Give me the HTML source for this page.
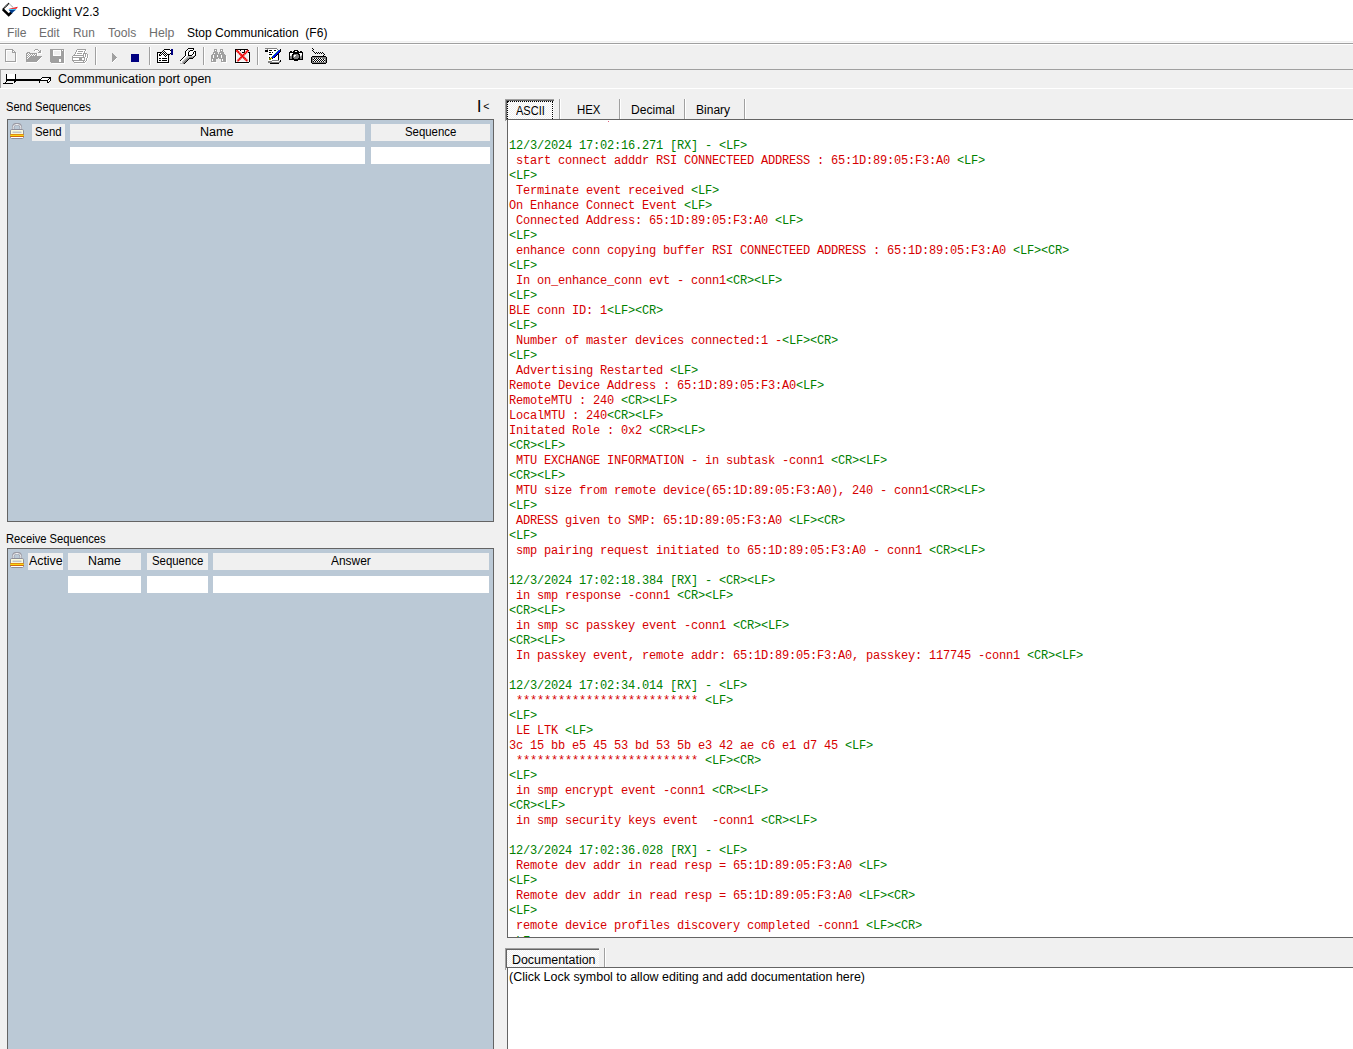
<!DOCTYPE html>
<html lang="en">
<head>
<meta charset="utf-8">
<title>Docklight V2.3</title>
<style>
*{box-sizing:border-box;margin:0;padding:0}
html,body{width:1353px;height:1049px;overflow:hidden;background:#f0f0f0}
body{position:relative;font-family:"Liberation Sans",sans-serif;font-size:12px;color:#000}
.a{position:absolute}
.t{position:absolute;white-space:pre;line-height:16px;height:16px;font-size:12px;transform-origin:0 0}
#topwhite{left:0;top:0;width:1353px;height:41px;background:#fff}
.hl{left:0;width:1353px;height:1px}
.panel{background:#bbc9d6;border:1px solid #646464}
.cell{background:#f0f0f0}
.wcell{background:#fff}
.vsep{width:2px;border-left:1px solid #a0a0a0;border-right:1px solid #fff}
#log{left:507px;top:119px;width:860px;height:819px;background:#fff;border:1px solid #646464;overflow:hidden}
#logtext{position:absolute;left:1px;top:19px;font-family:"Liberation Mono",monospace;font-size:12px;letter-spacing:-0.2012px;line-height:15px;color:#d60000}
#logtext div{height:15px;white-space:pre}
.g{color:#008000}
#doc{left:507px;top:967px;width:860px;height:100px;background:#fff;border:1px solid #646464}
.dith{background-color:#f0f0f0;background-image:
 linear-gradient(45deg,#fff 25%,transparent 25%,transparent 75%,#fff 75%),
 linear-gradient(45deg,#fff 25%,transparent 25%,transparent 75%,#fff 75%);
 background-size:2px 2px;background-position:0 0,1px 1px}
</style>
</head>
<body>
<div class="a" id="topwhite"></div>
<div class="a hl" style="top:42px;background:#f8f8f8"></div>
<div class="a hl" style="top:43px;background:#a0a0a0"></div>
<div class="a hl" style="top:44px;background:#fff"></div>
<div class="a hl" style="top:69px;background:#a0a0a0"></div>
<div class="a" style="left:0;top:69px;width:1px;height:19px;background:#a0a0a0"></div>
<div class="a hl" style="top:88px;background:#fff"></div>

<!-- toolbar separators -->
<div class="a vsep" style="left:95px;top:47px;height:18px"></div>
<div class="a vsep" style="left:149px;top:47px;height:18px"></div>
<div class="a vsep" style="left:203px;top:47px;height:18px"></div>
<div class="a vsep" style="left:257px;top:47px;height:18px"></div>

<!-- left panels -->
<div class="a panel" style="left:7px;top:119px;width:487px;height:403px"></div>
<div class="a cell" style="left:32px;top:124px;width:33px;height:17px"></div>
<div class="a cell" style="left:70px;top:124px;width:295px;height:17px"></div>
<div class="a cell" style="left:371px;top:124px;width:119px;height:17px"></div>
<div class="a wcell" style="left:70px;top:147px;width:295px;height:17px"></div>
<div class="a wcell" style="left:371px;top:147px;width:119px;height:17px"></div>

<div class="a panel" style="left:7px;top:548px;width:487px;height:520px"></div>
<div class="a cell" style="left:28px;top:553px;width:35px;height:17px"></div>
<div class="a cell" style="left:68px;top:553px;width:73px;height:17px"></div>
<div class="a cell" style="left:147px;top:553px;width:61px;height:17px"></div>
<div class="a cell" style="left:213px;top:553px;width:276px;height:17px"></div>
<div class="a wcell" style="left:68px;top:576px;width:73px;height:17px"></div>
<div class="a wcell" style="left:147px;top:576px;width:61px;height:17px"></div>
<div class="a wcell" style="left:213px;top:576px;width:276px;height:17px"></div>

<!-- tabs -->
<div class="a dith" style="left:507px;top:101px;width:47px;height:18px"></div>
<div class="a" style="left:505px;top:99px;width:49px;height:1px;background:#a0a0a0"></div>
<div class="a" style="left:506px;top:100px;width:48px;height:1px;background:#646464"></div>
<div class="a" style="left:505px;top:99px;width:1px;height:22px;background:#a0a0a0"></div>
<div class="a" style="left:506px;top:100px;width:1px;height:20px;background:#646464"></div>
<div class="a" style="left:507px;top:101px;width:46px;height:18px;border:1px dotted #000;border-bottom:none"></div>
<div class="a vsep" style="left:559px;top:99px;height:20px"></div>
<div class="a vsep" style="left:619px;top:99px;height:20px"></div>
<div class="a vsep" style="left:684px;top:99px;height:20px"></div>
<div class="a vsep" style="left:744px;top:99px;height:20px"></div>

<div class="a" id="log">
<div class="a" style="left:100px;top:1px;width:1px;height:1px;background:#e06080"></div>
<div id="logtext">
<div class="g">12/3/2024 17:02:16.271 [RX] - &lt;LF&gt;</div>
<div> start connect adddr RSI CONNECTEED ADDRESS : 65:1D:89:05:F3:A0 <span class="g">&lt;LF&gt;</span></div>
<div><span class="g">&lt;LF&gt;</span></div>
<div> Terminate event received <span class="g">&lt;LF&gt;</span></div>
<div>On Enhance Connect Event <span class="g">&lt;LF&gt;</span></div>
<div> Connected Address: 65:1D:89:05:F3:A0 <span class="g">&lt;LF&gt;</span></div>
<div><span class="g">&lt;LF&gt;</span></div>
<div> enhance conn copying buffer RSI CONNECTEED ADDRESS : 65:1D:89:05:F3:A0 <span class="g">&lt;LF&gt;&lt;CR&gt;</span></div>
<div><span class="g">&lt;LF&gt;</span></div>
<div> In on_enhance_conn evt - conn1<span class="g">&lt;CR&gt;&lt;LF&gt;</span></div>
<div><span class="g">&lt;LF&gt;</span></div>
<div>BLE conn ID: 1<span class="g">&lt;LF&gt;&lt;CR&gt;</span></div>
<div><span class="g">&lt;LF&gt;</span></div>
<div> Number of master devices connected:1 -<span class="g">&lt;LF&gt;&lt;CR&gt;</span></div>
<div><span class="g">&lt;LF&gt;</span></div>
<div> Advertising Restarted <span class="g">&lt;LF&gt;</span></div>
<div>Remote Device Address : 65:1D:89:05:F3:A0<span class="g">&lt;LF&gt;</span></div>
<div>RemoteMTU : 240 <span class="g">&lt;CR&gt;&lt;LF&gt;</span></div>
<div>LocalMTU : 240<span class="g">&lt;CR&gt;&lt;LF&gt;</span></div>
<div>Initated Role : 0x2 <span class="g">&lt;CR&gt;&lt;LF&gt;</span></div>
<div><span class="g">&lt;CR&gt;&lt;LF&gt;</span></div>
<div> MTU EXCHANGE INFORMATION - in subtask -conn1 <span class="g">&lt;CR&gt;&lt;LF&gt;</span></div>
<div><span class="g">&lt;CR&gt;&lt;LF&gt;</span></div>
<div> MTU size from remote device(65:1D:89:05:F3:A0), 240 - conn1<span class="g">&lt;CR&gt;&lt;LF&gt;</span></div>
<div><span class="g">&lt;LF&gt;</span></div>
<div> ADRESS given to SMP: 65:1D:89:05:F3:A0 <span class="g">&lt;LF&gt;&lt;CR&gt;</span></div>
<div><span class="g">&lt;LF&gt;</span></div>
<div> smp pairing request initiated to 65:1D:89:05:F3:A0 - conn1 <span class="g">&lt;CR&gt;&lt;LF&gt;</span></div>
<div>&nbsp;</div>
<div class="g">12/3/2024 17:02:18.384 [RX] - &lt;CR&gt;&lt;LF&gt;</div>
<div> in smp response -conn1 <span class="g">&lt;CR&gt;&lt;LF&gt;</span></div>
<div><span class="g">&lt;CR&gt;&lt;LF&gt;</span></div>
<div> in smp sc passkey event -conn1 <span class="g">&lt;CR&gt;&lt;LF&gt;</span></div>
<div><span class="g">&lt;CR&gt;&lt;LF&gt;</span></div>
<div> In passkey event, remote addr: 65:1D:89:05:F3:A0, passkey: 117745 -conn1 <span class="g">&lt;CR&gt;&lt;LF&gt;</span></div>
<div>&nbsp;</div>
<div class="g">12/3/2024 17:02:34.014 [RX] - &lt;LF&gt;</div>
<div> ************************** <span class="g">&lt;LF&gt;</span></div>
<div><span class="g">&lt;LF&gt;</span></div>
<div> LE LTK <span class="g">&lt;LF&gt;</span></div>
<div>3c 15 bb e5 45 53 bd 53 5b e3 42 ae c6 e1 d7 45 <span class="g">&lt;LF&gt;</span></div>
<div> ************************** <span class="g">&lt;LF&gt;&lt;CR&gt;</span></div>
<div><span class="g">&lt;LF&gt;</span></div>
<div> in smp encrypt event -conn1 <span class="g">&lt;CR&gt;&lt;LF&gt;</span></div>
<div><span class="g">&lt;CR&gt;&lt;LF&gt;</span></div>
<div> in smp security keys event  -conn1 <span class="g">&lt;CR&gt;&lt;LF&gt;</span></div>
<div>&nbsp;</div>
<div class="g">12/3/2024 17:02:36.028 [RX] - &lt;LF&gt;</div>
<div> Remote dev addr in read resp = 65:1D:89:05:F3:A0 <span class="g">&lt;LF&gt;</span></div>
<div><span class="g">&lt;LF&gt;</span></div>
<div> Remote dev addr in read resp = 65:1D:89:05:F3:A0 <span class="g">&lt;LF&gt;&lt;CR&gt;</span></div>
<div><span class="g">&lt;LF&gt;</span></div>
<div> remote device profiles discovery completed -conn1 <span class="g">&lt;LF&gt;&lt;CR&gt;</span></div>
<div style="position:relative;top:1px"><span class="g">&lt;LF&gt;</span></div>
</div>
</div>

<!-- documentation tab -->
<div class="a dith" style="left:507px;top:950px;width:92px;height:17px"></div>
<div class="a" style="left:505px;top:948px;width:94px;height:1px;background:#a0a0a0"></div>
<div class="a" style="left:506px;top:949px;width:93px;height:1px;background:#646464"></div>
<div class="a" style="left:505px;top:948px;width:1px;height:22px;background:#a0a0a0"></div>
<div class="a" style="left:506px;top:949px;width:1px;height:19px;background:#646464"></div>
<div class="a vsep" style="left:604px;top:948px;height:19px"></div>
<div class="a" id="doc"></div>

<svg class="a" style="left:0;top:44px" width="340" height="45" viewBox="0 44 340 45" shape-rendering="crispEdges">
<path fill="#a0a0a0" d="M5 49h8v1h-8zM5 50h1v1h-1zM12 50h2v1h-2zM5 51h1v1h-1zM12 51h1v1h-1zM14 51h1v1h-1zM5 52h1v1h-1zM12 52h4v1h-4zM5 53h1v1h-1zM15 53h1v1h-1zM5 54h1v1h-1zM15 54h1v1h-1zM5 55h1v1h-1zM15 55h1v1h-1zM5 56h1v1h-1zM15 56h1v1h-1zM5 57h1v1h-1zM15 57h1v1h-1zM5 58h1v1h-1zM15 58h1v1h-1zM5 59h1v1h-1zM15 59h1v1h-1zM5 60h1v1h-1zM15 60h1v1h-1zM5 61h11v1h-11zM35 49h3v1h-3zM34 50h1v1h-1zM38 50h1v1h-1zM40 50h1v1h-1zM39 51h2v1h-2zM27 52h3v1h-3zM38 52h3v1h-3zM26 53h2v1h-2zM29 53h8v1h-8zM26 54h1v1h-1zM28 54h1v1h-1zM30 54h1v1h-1zM32 54h1v1h-1zM34 54h1v1h-1zM36 54h1v1h-1zM26 55h2v1h-2zM29 55h1v1h-1zM31 55h1v1h-1zM33 55h1v1h-1zM35 55h2v1h-2zM26 56h1v1h-1zM28 56h1v1h-1zM30 56h12v1h-12zM26 57h2v1h-2zM29 57h12v1h-12zM26 58h1v1h-1zM28 58h12v1h-12zM26 59h13v1h-13zM26 60h12v1h-12zM26 61h11v1h-11zM50 49h14v1h-14zM50 50h3v1h-3zM61 50h1v1h-1zM63 50h1v1h-1zM50 51h3v1h-3zM61 51h3v1h-3zM50 52h3v1h-3zM61 52h3v1h-3zM50 53h3v1h-3zM61 53h3v1h-3zM50 54h3v1h-3zM61 54h3v1h-3zM50 55h3v1h-3zM61 55h3v1h-3zM50 56h14v1h-14zM50 57h14v1h-14zM50 58h14v1h-14zM50 59h9v1h-9zM61 59h3v1h-3zM50 60h9v1h-9zM61 60h3v1h-3zM50 61h9v1h-9zM61 61h3v1h-3zM51 62h13v1h-13zM77 49h9v1h-9zM76 50h1v1h-1zM85 50h1v1h-1zM76 51h1v1h-1zM78 51h5v1h-5zM84 51h1v1h-1zM75 52h1v1h-1zM84 52h1v1h-1zM75 53h1v1h-1zM77 53h5v1h-5zM83 53h4v1h-4zM74 54h1v1h-1zM83 54h1v1h-1zM85 54h1v1h-1zM87 54h1v1h-1zM73 55h11v1h-11zM85 55h1v1h-1zM87 55h1v1h-1zM72 56h1v1h-1zM83 56h1v1h-1zM85 56h1v1h-1zM87 56h1v1h-1zM72 57h13v1h-13zM87 57h1v1h-1zM72 58h1v1h-1zM79 58h3v1h-3zM84 58h1v1h-1zM86 58h1v1h-1zM72 59h1v1h-1zM79 59h3v1h-3zM84 59h1v1h-1zM86 59h1v1h-1zM72 60h13v1h-13zM86 60h1v1h-1zM73 61h1v1h-1zM83 61h1v1h-1zM85 61h1v1h-1zM74 62h11v1h-11zM112 53h1v1h-1zM112 54h2v1h-2zM112 55h3v1h-3zM112 56h4v1h-4zM112 57h5v1h-5zM112 58h4v1h-4zM112 59h3v1h-3zM112 60h2v1h-2zM112 61h1v1h-1zM214 49h3v1h-3zM220 49h3v1h-3zM214 50h1v1h-1zM216 50h1v1h-1zM220 50h1v1h-1zM222 50h1v1h-1zM214 51h3v1h-3zM220 51h3v1h-3zM213 52h5v1h-5zM219 52h5v1h-5zM213 53h1v1h-1zM215 53h3v1h-3zM219 53h1v1h-1zM221 53h3v1h-3zM212 54h13v1h-13zM211 55h2v1h-2zM214 55h3v1h-3zM218 55h3v1h-3zM222 55h4v1h-4zM211 56h2v1h-2zM214 56h3v1h-3zM218 56h3v1h-3zM222 56h4v1h-4zM211 57h2v1h-2zM214 57h7v1h-7zM222 57h4v1h-4zM211 58h7v1h-7zM219 58h7v1h-7zM211 59h1v1h-1zM213 59h3v1h-3zM221 59h1v1h-1zM223 59h3v1h-3zM211 60h1v1h-1zM213 60h3v1h-3zM221 60h1v1h-1zM223 60h3v1h-3zM211 61h5v1h-5zM221 61h5v1h-5z"/>
<path fill="#ffffff" d="M6 50h6v1h-6zM6 51h1v1h-1zM13 51h1v1h-1zM6 52h1v1h-1zM6 53h1v1h-1zM16 53h1v1h-1zM6 54h1v1h-1zM16 54h1v1h-1zM6 55h1v1h-1zM16 55h1v1h-1zM6 56h1v1h-1zM16 56h1v1h-1zM6 57h1v1h-1zM16 57h1v1h-1zM6 58h1v1h-1zM16 58h1v1h-1zM6 59h1v1h-1zM16 59h1v1h-1zM6 60h1v1h-1zM16 60h1v1h-1zM16 61h1v1h-1zM6 62h11v1h-11zM35 50h3v1h-3zM35 51h1v1h-1zM38 51h1v1h-1zM41 51h1v1h-1zM41 52h1v1h-1zM28 53h1v1h-1zM37 53h1v1h-1zM39 53h3v1h-3zM27 54h1v1h-1zM29 54h1v1h-1zM31 54h1v1h-1zM33 54h1v1h-1zM35 54h1v1h-1zM37 54h1v1h-1zM28 55h1v1h-1zM30 55h1v1h-1zM32 55h1v1h-1zM34 55h1v1h-1zM37 55h1v1h-1zM27 56h1v1h-1zM29 56h1v1h-1zM28 57h1v1h-1zM41 57h1v1h-1zM27 58h1v1h-1zM40 58h1v1h-1zM39 59h1v1h-1zM38 60h1v1h-1zM37 61h1v1h-1zM27 62h10v1h-10zM53 50h8v1h-8zM62 50h1v1h-1zM64 50h1v1h-1zM53 51h1v1h-1zM60 51h1v1h-1zM64 51h1v1h-1zM53 52h1v1h-1zM60 52h1v1h-1zM64 52h1v1h-1zM53 53h1v1h-1zM60 53h1v1h-1zM64 53h1v1h-1zM53 54h1v1h-1zM60 54h1v1h-1zM64 54h1v1h-1zM53 55h8v1h-8zM64 55h1v1h-1zM64 56h1v1h-1zM64 57h1v1h-1zM64 58h1v1h-1zM59 59h2v1h-2zM64 59h1v1h-1zM59 60h2v1h-2zM64 60h1v1h-1zM59 61h2v1h-2zM64 61h1v1h-1zM64 62h1v1h-1zM52 63h13v1h-13zM77 50h8v1h-8zM86 50h1v1h-1zM77 51h1v1h-1zM83 51h1v1h-1zM85 51h1v1h-1zM76 52h8v1h-8zM85 52h1v1h-1zM76 53h1v1h-1zM82 53h1v1h-1zM75 54h8v1h-8zM84 54h1v1h-1zM86 54h1v1h-1zM84 55h1v1h-1zM86 55h1v1h-1zM88 55h1v1h-1zM73 56h10v1h-10zM84 56h1v1h-1zM86 56h1v1h-1zM88 56h1v1h-1zM85 57h2v1h-2zM88 57h1v1h-1zM73 58h6v1h-6zM82 58h2v1h-2zM85 58h1v1h-1zM87 58h1v1h-1zM73 59h6v1h-6zM82 59h2v1h-2zM85 59h1v1h-1zM87 59h1v1h-1zM85 60h1v1h-1zM87 60h1v1h-1zM74 61h9v1h-9zM84 61h1v1h-1zM86 61h1v1h-1zM85 62h1v1h-1zM75 63h11v1h-11zM116 58h1v1h-1zM115 59h1v1h-1zM114 60h1v1h-1zM113 61h1v1h-1zM112 62h1v1h-1zM164 50h6v1h-6zM163 51h1v1h-1zM165 51h6v1h-6zM162 52h1v1h-1zM164 52h1v1h-1zM166 52h5v1h-5zM158 53h2v1h-2zM161 53h1v1h-1zM163 53h1v1h-1zM165 53h1v1h-1zM158 54h1v1h-1zM160 54h1v1h-1zM162 54h1v1h-1zM164 54h1v1h-1zM166 54h1v1h-1zM158 55h1v1h-1zM161 55h3v1h-3zM165 55h1v1h-1zM167 55h1v1h-1zM158 56h7v1h-7zM166 56h2v1h-2zM158 57h10v1h-10zM158 58h1v1h-1zM161 58h1v1h-1zM167 58h1v1h-1zM158 59h10v1h-10zM158 60h1v1h-1zM161 60h1v1h-1zM167 60h1v1h-1zM158 61h10v1h-10zM158 63h12v1h-12zM188 49h5v1h-5zM187 50h1v1h-1zM186 51h2v1h-2zM190 51h3v1h-3zM186 52h2v1h-2zM189 52h4v1h-4zM194 52h1v1h-1zM186 53h2v1h-2zM189 53h4v1h-4zM194 53h1v1h-1zM186 54h2v1h-2zM189 54h3v1h-3zM193 54h2v1h-2zM186 55h2v1h-2zM192 55h2v1h-2zM185 56h2v1h-2zM184 57h2v1h-2zM183 58h2v1h-2zM182 59h2v1h-2zM181 60h2v1h-2zM181 61h1v1h-1zM181 62h1v1h-1zM215 50h1v1h-1zM221 50h1v1h-1zM214 53h1v1h-1zM220 53h1v1h-1zM213 55h1v1h-1zM217 55h1v1h-1zM221 55h1v1h-1zM213 56h1v1h-1zM217 56h1v1h-1zM221 56h1v1h-1zM213 57h1v1h-1zM221 57h1v1h-1zM212 59h1v1h-1zM222 59h1v1h-1zM212 60h1v1h-1zM222 60h1v1h-1zM226 56h1v1h-1zM226 57h1v1h-1zM226 58h1v1h-1zM226 59h1v1h-1zM226 60h1v1h-1zM226 61h1v1h-1zM226 62h1v1h-1zM212 62h5v1h-5zM222 62h5v1h-5zM236 50h4v1h-4zM241 50h3v1h-3zM245 50h3v1h-3zM236 51h1v1h-1zM245 51h1v1h-1zM236 52h1v1h-1zM245 52h1v1h-1zM236 53h1v1h-1zM248 53h1v1h-1zM236 54h1v1h-1zM248 54h1v1h-1zM236 55h1v1h-1zM248 55h1v1h-1zM236 56h1v1h-1zM248 56h1v1h-1zM236 57h1v1h-1zM248 57h1v1h-1zM236 58h1v1h-1zM248 58h1v1h-1zM236 59h1v1h-1zM248 59h1v1h-1zM236 60h1v1h-1zM248 60h1v1h-1zM236 61h13v1h-13zM236 63h14v1h-14zM268 49h9v1h-9zM268 50h1v1h-1zM272 50h2v1h-2zM276 50h2v1h-2zM268 51h9v1h-9zM268 52h1v1h-1zM271 52h1v1h-1zM273 52h3v1h-3zM268 53h7v1h-7zM268 54h1v1h-1zM272 54h2v1h-2zM268 55h5v1h-5zM277 55h1v1h-1zM268 56h4v1h-4zM276 56h2v1h-2zM268 57h1v1h-1zM270 57h1v1h-1zM275 57h3v1h-3zM268 58h1v1h-1zM273 58h5v1h-5zM268 59h1v1h-1zM271 59h7v1h-7zM268 60h4v1h-4zM279 60h1v1h-1zM272 61h7v1h-7zM295 51h2v1h-2zM290 53h3v1h-3zM299 53h3v1h-3zM290 54h2v1h-2zM300 54h2v1h-2zM290 55h1v1h-1zM294 55h2v1h-2zM300 55h1v1h-1zM294 56h1v1h-1zM313 58h1v1h-1zM315 58h1v1h-1zM317 58h1v1h-1zM319 58h1v1h-1zM321 58h1v1h-1zM314 59h1v1h-1zM316 59h1v1h-1zM318 59h1v1h-1zM320 59h1v1h-1zM322 59h1v1h-1zM324 59h1v1h-1zM313 60h1v1h-1zM315 60h1v1h-1zM317 60h1v1h-1zM319 60h1v1h-1zM321 60h1v1h-1zM323 60h1v1h-1zM314 61h1v1h-1zM316 61h1v1h-1zM318 61h1v1h-1zM320 61h1v1h-1zM322 61h1v1h-1zM324 61h1v1h-1zM7 74h8v1h-8zM7 75h8v1h-8zM7 76h8v1h-8zM7 77h8v1h-8zM7 78h8v1h-8zM41 78h7v1h-7zM41 79h6v1h-6zM49 79h1v1h-1zM49 80h1v1h-1zM48 80h1v1h-1zM48 81h1v1h-1z"/>
<path fill="#000080" d="M131 54h8v1h-8zM131 55h8v1h-8zM131 56h8v1h-8zM131 57h8v1h-8zM131 58h8v1h-8zM131 59h8v1h-8zM131 60h8v1h-8zM131 61h8v1h-8zM171 49h2v1h-2zM171 50h2v1h-2zM171 51h2v1h-2zM171 52h2v1h-2zM171 53h2v1h-2zM171 54h2v1h-2z"/>
<path fill="#000000" d="M164 49h6v1h-6zM163 50h1v1h-1zM170 50h1v1h-1zM162 51h1v1h-1zM164 51h1v1h-1zM157 52h5v1h-5zM163 52h1v1h-1zM165 52h1v1h-1zM157 53h1v1h-1zM160 53h1v1h-1zM162 53h1v1h-1zM164 53h1v1h-1zM166 53h1v1h-1zM170 53h1v1h-1zM157 54h1v1h-1zM159 54h1v1h-1zM161 54h1v1h-1zM163 54h1v1h-1zM165 54h1v1h-1zM167 54h3v1h-3zM157 55h1v1h-1zM159 55h2v1h-2zM164 55h1v1h-1zM166 55h1v1h-1zM168 55h1v1h-1zM157 56h1v1h-1zM165 56h1v1h-1zM168 56h1v1h-1zM157 57h1v1h-1zM168 57h1v1h-1zM157 58h1v1h-1zM159 58h2v1h-2zM162 58h5v1h-5zM168 58h1v1h-1zM157 59h1v1h-1zM168 59h1v1h-1zM157 60h1v1h-1zM159 60h2v1h-2zM162 60h5v1h-5zM168 60h1v1h-1zM157 61h1v1h-1zM168 61h1v1h-1zM157 62h12v1h-12zM188 48h6v1h-6zM187 49h1v1h-1zM193 49h1v1h-1zM186 50h1v1h-1zM190 50h3v1h-3zM185 51h1v1h-1zM189 51h1v1h-1zM194 51h2v1h-2zM185 52h1v1h-1zM188 52h1v1h-1zM193 52h1v1h-1zM195 52h1v1h-1zM185 53h1v1h-1zM188 53h1v1h-1zM193 53h1v1h-1zM195 53h1v1h-1zM185 54h1v1h-1zM188 54h1v1h-1zM192 54h1v1h-1zM195 54h1v1h-1zM185 55h1v1h-1zM188 55h4v1h-4zM195 55h1v1h-1zM184 56h1v1h-1zM194 56h1v1h-1zM183 57h1v1h-1zM193 57h1v1h-1zM182 58h1v1h-1zM189 58h4v1h-4zM181 59h1v1h-1zM188 59h1v1h-1zM180 60h1v1h-1zM187 60h1v1h-1zM186 61h1v1h-1zM185 62h1v1h-1zM184 63h1v1h-1zM235 49h13v1h-13zM235 50h1v1h-1zM240 50h1v1h-1zM244 50h1v1h-1zM248 50h1v1h-1zM235 51h1v1h-1zM244 51h1v1h-1zM235 52h1v1h-1zM242 52h3v1h-3zM248 52h2v1h-2zM235 53h1v1h-1zM249 53h1v1h-1zM235 54h1v1h-1zM249 54h1v1h-1zM235 55h1v1h-1zM249 55h1v1h-1zM235 56h1v1h-1zM249 56h1v1h-1zM235 57h1v1h-1zM249 57h1v1h-1zM235 58h1v1h-1zM249 58h1v1h-1zM235 59h1v1h-1zM249 59h1v1h-1zM235 60h1v1h-1zM249 60h1v1h-1zM235 61h1v1h-1zM249 61h1v1h-1zM235 62h14v1h-14zM280 49h1v1h-1zM265 50h3v1h-3zM269 50h3v1h-3zM274 50h2v1h-2zM280 50h1v1h-1zM265 51h3v1h-3zM280 51h1v1h-1zM269 52h2v1h-2zM272 52h1v1h-1zM279 52h1v1h-1zM278 53h1v1h-1zM269 54h3v1h-3zM277 54h2v1h-2zM276 55h1v1h-1zM278 55h1v1h-1zM275 56h1v1h-1zM278 56h1v1h-1zM269 57h1v1h-1zM274 57h1v1h-1zM278 57h1v1h-1zM272 58h1v1h-1zM278 58h1v1h-1zM278 59h1v1h-1zM280 60h1v1h-1zM280 61h1v1h-1zM270 63h9v1h-9zM294 50h4v1h-4zM290 51h2v1h-2zM293 51h2v1h-2zM297 51h2v1h-2zM300 51h2v1h-2zM289 52h14v1h-14zM289 53h1v1h-1zM293 53h6v1h-6zM302 53h1v1h-1zM289 54h1v1h-1zM292 54h2v1h-2zM298 54h2v1h-2zM302 54h1v1h-1zM289 55h1v1h-1zM292 55h1v1h-1zM299 55h1v1h-1zM302 55h1v1h-1zM289 56h1v1h-1zM292 56h1v1h-1zM299 56h1v1h-1zM302 56h1v1h-1zM289 57h1v1h-1zM292 57h1v1h-1zM299 57h1v1h-1zM302 57h1v1h-1zM289 58h1v1h-1zM292 58h2v1h-2zM298 58h2v1h-2zM302 58h1v1h-1zM289 59h14v1h-14zM294 60h4v1h-4zM312 48h1v1h-1zM313 49h1v1h-1zM312 50h1v1h-1zM313 51h1v1h-1zM314 52h1v1h-1zM316 52h1v1h-1zM318 52h1v1h-1zM320 52h1v1h-1zM322 52h1v1h-1zM315 53h1v1h-1zM317 53h1v1h-1zM319 53h1v1h-1zM321 53h1v1h-1zM323 53h1v1h-1zM324 54h1v1h-1zM323 55h1v1h-1zM312 56h14v1h-14zM311 57h1v1h-1zM326 57h1v1h-1zM311 58h1v1h-1zM314 58h1v1h-1zM316 58h1v1h-1zM318 58h1v1h-1zM320 58h1v1h-1zM326 58h1v1h-1zM311 59h1v1h-1zM313 59h1v1h-1zM315 59h1v1h-1zM317 59h1v1h-1zM319 59h1v1h-1zM321 59h1v1h-1zM323 59h1v1h-1zM326 59h1v1h-1zM311 60h1v1h-1zM314 60h1v1h-1zM316 60h1v1h-1zM318 60h1v1h-1zM320 60h1v1h-1zM322 60h1v1h-1zM324 60h1v1h-1zM326 60h1v1h-1zM311 61h1v1h-1zM313 61h1v1h-1zM315 61h1v1h-1zM317 61h1v1h-1zM319 61h1v1h-1zM321 61h1v1h-1zM323 61h1v1h-1zM326 61h1v1h-1zM311 62h1v1h-1zM326 62h1v1h-1zM312 63h14v1h-14zM6 74h1v1h-1zM6 75h1v1h-1zM6 76h1v1h-1zM6 77h1v1h-1zM6 78h1v1h-1zM6 79h1v1h-1zM6 80h1v1h-1zM6 81h1v1h-1zM15 74h1v1h-1zM15 75h1v1h-1zM15 76h1v1h-1zM15 77h1v1h-1zM15 78h1v1h-1zM15 79h1v1h-1zM15 80h1v1h-1zM15 81h1v1h-1zM6 79h10v1h-10zM6 80h34v1h-34zM15 79h26v1h-26zM3 83h10v1h-10zM5 82h1v1h-1zM14 82h1v1h-1zM14 81h1v1h-1zM39 81h1v1h-1zM39 82h1v1h-1zM42 77h9v1h-9zM41 78h1v1h-1zM40 79h1v1h-1zM40 80h8v1h-8zM50 78h1v1h-1zM50 79h1v1h-1zM50 80h1v1h-1zM49 81h1v1h-1zM48 82h1v1h-1zM47 82h1v1h-1zM47 81h1v1h-1zM47 80h1v1h-1zM48 79h1v1h-1zM49 78h1v1h-1z"/>
<path fill="#c0c0c0" d="M188 50h2v1h-2zM188 51h1v1h-1zM194 55h1v1h-1zM187 56h6v1h-6zM186 57h3v1h-3zM185 58h2v1h-2zM184 59h2v1h-2zM183 60h2v1h-2zM182 61h2v1h-2zM182 62h1v1h-1zM180 63h3v1h-3zM291 55h1v1h-1zM301 55h1v1h-1zM300 56h1v1h-1z"/>
<path fill="#808080" d="M193 56h1v1h-1zM189 57h4v1h-4zM187 58h2v1h-2zM186 59h2v1h-2zM185 60h2v1h-2zM184 61h2v1h-2zM183 62h2v1h-2zM183 63h1v1h-1zM265 48h12v1h-12zM267 49h1v1h-1zM277 49h1v1h-1zM272 60h7v1h-7zM268 61h4v1h-4zM279 61h1v1h-1zM268 62h12v1h-12zM294 54h4v1h-4zM293 55h1v1h-1zM296 55h3v1h-3zM290 56h2v1h-2zM293 56h1v1h-1zM295 56h4v1h-4zM301 56h1v1h-1zM290 57h2v1h-2zM293 57h6v1h-6zM300 57h2v1h-2zM290 58h2v1h-2zM294 58h4v1h-4zM300 58h2v1h-2zM312 57h14v1h-14zM312 58h1v1h-1zM322 58h4v1h-4zM312 59h1v1h-1zM325 59h1v1h-1zM312 60h1v1h-1zM325 60h1v1h-1zM312 61h1v1h-1zM325 61h1v1h-1zM312 62h14v1h-14z"/>
<path fill="#008080" d="M278 50h1v1h-1zM277 51h1v1h-1zM276 52h1v1h-1zM275 53h1v1h-1zM274 54h1v1h-1zM273 55h1v1h-1zM272 56h1v1h-1z"/>
<path fill="#0000ff" d="M279 50h1v1h-1zM278 51h2v1h-2zM277 52h2v1h-2zM276 53h2v1h-2zM275 54h2v1h-2zM274 55h2v1h-2zM273 56h2v1h-2zM272 57h2v1h-2z"/>
<path fill="#808000" d="M271 57h1v1h-1zM269 58h2v1h-2zM269 59h2v1h-2z"/>
<path fill="#ffff00" d="M271 58h1v1h-1z"/>
</svg>
<svg class="a" style="left:235px;top:49px" width="15" height="14" viewBox="235 49 15 14">
<path d="M236.500 50.300L247.500 61.200" stroke="#f00000" stroke-width="2.200" stroke-dasharray="1.600 0.300"/>
<path d="M248.300 50.200L237.300 61.300" stroke="#f00000" stroke-width="2" stroke-dasharray="1.600 0.300"/>
</svg>
<svg class="a" style="left:0;top:0" width="22" height="20" viewBox="0 0 22 20">
<path d="M8.900 3.300L2.600 9.500" stroke="#000" stroke-width="1.500" stroke-dasharray="1.300 0.350" fill="none"/>
<path d="M8.700 3.300L13.600 7.900" stroke="#555" stroke-width="0.800" stroke-dasharray="1 0.600" fill="none"/>
<path d="M2.900 9.300L8.700 15L11.700 12.100" stroke="#000" stroke-width="2.500" fill="none" stroke-linejoin="miter"/>
<polygon points="9,8.700 17.900,6.800 16.600,8.800 9.200,9" fill="#e8141c"/>
<polygon points="8.300,9.200 16.400,9 15.400,10.300 9.400,10.300" fill="#2cb8ee"/>
<polygon points="8.900,9.900 15.500,10.100 11.700,13.400" fill="#003e8e"/>
</svg>
<svg class="a" style="left:10px;top:123px" width="14" height="17" viewBox="0 0 14 17">
<path d="M3.2 7V4.2C3.2 1.9 4.8 1 7 1s3.8 0.9 3.8 3.2V7" fill="none" stroke="#9a9aa4" stroke-width="2.400"/>
<path d="M3.2 7V4.2C3.2 2.3 4.9 1.5 7 1.5s3.8 0.8 3.8 2.7V7" fill="none" stroke="#f4f4f4" stroke-width="1"/>
<rect x="0.5" y="6.5" width="13" height="9" rx="1.2" fill="#fbfbdc" stroke="#8e8e9a"/>
<rect x="2.500" y="8.500" width="9" height="1.600" fill="#c4c4c8"/>
<rect x="0.300" y="11" width="13.400" height="1" fill="#e28a12"/>
<rect x="0.300" y="12" width="13.400" height="1" fill="#f6d812"/>
<rect x="0.300" y="13" width="13.400" height="1" fill="#d2680e"/>
<rect x="1" y="14" width="12" height="1" fill="#ffffff"/>
</svg>
<svg class="a" style="left:10px;top:552px" width="14" height="17" viewBox="0 0 14 17">
<path d="M3.2 7V4.2C3.2 1.9 4.8 1 7 1s3.8 0.9 3.8 3.2V7" fill="none" stroke="#9a9aa4" stroke-width="2.400"/>
<path d="M3.2 7V4.2C3.2 2.3 4.9 1.5 7 1.5s3.8 0.8 3.8 2.7V7" fill="none" stroke="#f4f4f4" stroke-width="1"/>
<rect x="0.5" y="6.5" width="13" height="9" rx="1.2" fill="#fbfbdc" stroke="#8e8e9a"/>
<rect x="2.500" y="8.500" width="9" height="1.600" fill="#c4c4c8"/>
<rect x="0.300" y="11" width="13.400" height="1" fill="#e28a12"/>
<rect x="0.300" y="12" width="13.400" height="1" fill="#f6d812"/>
<rect x="0.300" y="13" width="13.400" height="1" fill="#d2680e"/>
<rect x="1" y="14" width="12" height="1" fill="#ffffff"/>
</svg>

<span class="t" id="title" style="left:22.45px;top:4px;transform:scaleX(0.9977);">Docklight V2.3</span>
<span class="t" id="m1" style="left:7.22px;top:25px;transform:scaleX(1.0116);color:#6d6d6d;">File</span>
<span class="t" id="m2" style="left:39.2px;top:25px;transform:scaleX(0.9874);color:#6d6d6d;">Edit</span>
<span class="t" id="m3" style="left:73.24px;top:25px;transform:scaleX(0.9898);color:#6d6d6d;">Run</span>
<span class="t" id="m4" style="left:107.66px;top:25px;transform:scaleX(1.0065);color:#6d6d6d;">Tools</span>
<span class="t" id="m5" style="left:149.14px;top:25px;transform:scaleX(1.0260);color:#6d6d6d;">Help</span>
<span class="t" id="m6" style="left:187.35px;top:25px;transform:scaleX(1.0026);">Stop Communication  (F6)</span>
<span class="t" id="status" style="left:58.15px;top:71px;transform:scaleX(1.0401);">Commmunication port open</span>
<span class="t" id="sendseq" style="left:5.52px;top:99px;transform:scaleX(0.9280);">Send Sequences</span>
<span class="t" id="collapse" style="left:477.6px;top:99px"><span style="display:inline-block;font-weight:bold;transform:translateY(-2px) scaleY(1.08)">|</span><span style="display:inline-block;font-size:10.5px;margin-left:2.4px;transform:translateY(-1.5px)">&lt;</span></span>
<span class="t" id="recvseq" style="left:6.23px;top:531px;transform:scaleX(0.9340);">Receive Sequences</span>
<span class="t" id="hsend" style="left:34.54px;top:124px;transform:scaleX(0.9497);">Send</span>
<span class="t" id="hname" style="left:199.82px;top:124px;transform:scaleX(1.0466);">Name</span>
<span class="t" id="hseq" style="left:404.52px;top:124px;transform:scaleX(0.9499);">Sequence</span>
<span class="t" id="ractive" style="left:28.66px;top:553px;transform:scaleX(1.0299);">Active</span>
<span class="t" id="rname" style="left:88.15px;top:553px;transform:scaleX(1.0311);">Name</span>
<span class="t" id="rseq" style="left:151.52px;top:553px;transform:scaleX(0.9499);">Sequence</span>
<span class="t" id="rans" style="left:330.77px;top:553px;transform:scaleX(0.9954);">Answer</span>
<span class="t" id="tascii" style="left:515.65px;top:103px;transform:scaleX(0.9186);">ASCII</span>
<span class="t" id="thex" style="left:577.16px;top:102px;transform:scaleX(0.9518);">HEX</span>
<span class="t" id="tdec" style="left:630.94px;top:102px;transform:scaleX(1.0071);">Decimal</span>
<span class="t" id="tbin" style="left:695.91px;top:102px;transform:scaleX(1.0028);">Binary</span>
<span class="t" id="tdoc" style="left:512.09px;top:952px;transform:scaleX(1.0340);">Documentation</span>
<span class="t" id="doctext" style="left:508.92px;top:969px;transform:scaleX(1.0383);">(Click Lock symbol to allow editing and add documentation here)</span>
</body>
</html>
